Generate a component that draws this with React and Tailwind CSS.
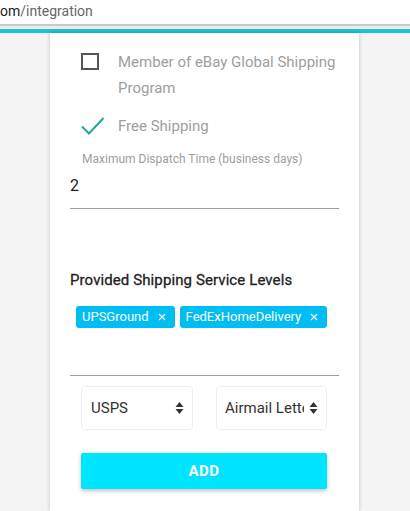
import React from "react";

function Arrows() {
  return (
    <svg width="9" height="14" viewBox="0 0 9 14" className="shrink-0">
      <path d="M4.5 1 L8.5 6 L0.5 6 Z" fill="#333" />
      <path d="M4.5 13 L8.5 8 L0.5 8 Z" fill="#333" />
    </svg>
  );
}

function Chip({ label }) {
  return (
    <div className="flex h-[22px] items-center gap-[9px] rounded-[3px] bg-[#00bdf2] pl-[6px] pr-[9px] text-[13px] text-white">
      <span>{label}</span>
      <svg width="8" height="8" viewBox="0 0 8 8">
        <path d="M1 1 L7 7 M7 1 L1 7" stroke="white" strokeWidth="1.2" />
      </svg>
    </div>
  );
}

export default function App() {
  return (
    <div
      className="flex h-[511px] w-[410px] flex-col overflow-hidden bg-[#f4f4f4]"
      style={{ fontFamily: "Roboto, 'Liberation Sans', sans-serif" }}
    >
      <div className="h-[24px] bg-white pl-0 text-[14px] leading-[23px]">
        <span className="text-[#222]">om</span>
        <span className="text-[#666]">/integration</span>
      </div>
      <div className="h-[2px] bg-[#c9c9c9]" />
      <div className="h-[3px] bg-[#ececec]" />
      <div className="h-[4px] bg-[#1fc1d3]" />
      <div className="ml-[50px] w-[309px] flex-1 bg-white px-5 pt-[16px] shadow-[0_0_4px_rgba(0,0,0,0.22)]">
        <div className="flex items-start pl-[11px]">
          <div className="mt-[4px] h-[17px] w-[18px] shrink-0 border-2 border-[#555]" />
          <div className="ml-[19px] whitespace-nowrap text-[15px] leading-[26px] text-[#9e9e9e]">
            Member of eBay Global Shipping
            <br />
            Program
          </div>
        </div>
        <div className="mt-[12px] flex items-center pl-[11px]">
          <svg width="24" height="20" viewBox="0 0 24 20" className="shrink-0">
            <path d="M1 10.5 L8 17.5 L22.5 2" fill="none" stroke="#26a69a" strokeWidth="2" />
          </svg>
          <div className="ml-[13px] text-[15px] leading-[26px] text-[#9e9e9e]">Free Shipping</div>
        </div>
        <div className="mt-[12px] pl-[12px] text-[12px] leading-[16px] text-[#9e9e9e]">
          Maximum Dispatch Time (business days)
        </div>
        <div className="mt-[7px] text-[16px] leading-[24px] text-[#222]">2</div>
        <div className="mt-[10px] h-px bg-[#9e9e9e]" />
        <div className="mt-[61px] text-[15px] font-normal leading-[20px] tracking-[0.1px] text-[#222] [-webkit-text-stroke:0.3px_#222]">
          Provided Shipping Service Levels
        </div>
        <div className="mt-[16px] flex gap-[5px] pl-[6px]">
          <Chip label="UPSGround" />
          <Chip label="FedExHomeDelivery" />
        </div>
        <div className="mt-[47px] h-px bg-[#9e9e9e]" />
        <div className="mt-[10px] flex justify-between pl-[11px] pr-[12px]">
          <div className="flex h-[44px] w-[112px] items-center justify-between rounded-[4px] border border-[#eee] pl-[9px] pr-[8px] text-[15px] text-[#333]">
            <span>USPS</span>
            <Arrows />
          </div>
          <div className="flex h-[44px] w-[111px] items-center justify-between rounded-[4px] border border-[#eee] pl-[8px] pr-[8px] text-[15px] text-[#333]">
            <span className="w-[79px] overflow-hidden whitespace-nowrap">Airmail Letter</span>
            <Arrows />
          </div>
        </div>
        <div className="ml-[11px] mr-[12px] mt-[23px] flex h-[36px] items-center justify-center rounded-[2px] bg-[#00e5ff] text-[15px] font-bold tracking-[0.5px] text-white shadow-[0_2px_4px_rgba(0,0,0,0.25)]">
          ADD
        </div>
      </div>
    </div>
  );
}
